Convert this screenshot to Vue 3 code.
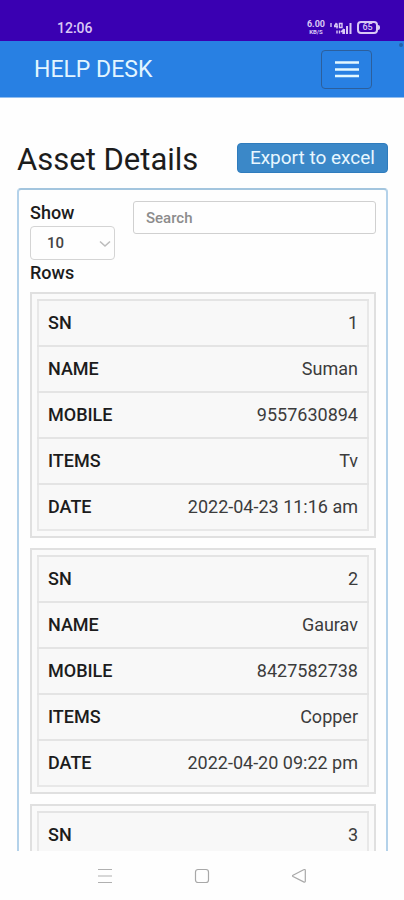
<script setup>
import { ref, computed } from 'vue'

const pageSize = ref('10')
const query = ref('')

const assets = [
  { sn: 1, name: 'Suman', mobile: '9557630894', items: 'Tv', date: '2022-04-23 11:16 am' },
  { sn: 2, name: 'Gaurav', mobile: '8427582738', items: 'Copper', date: '2022-04-20 09:22 pm' },
  { sn: 3 },
]
const fields = ['sn', 'name', 'mobile', 'items', 'date']

const visible = computed(() => {
  const q = query.value.toLowerCase()
  return assets.filter((a) => Object.values(a).join(' ').toLowerCase().includes(q))
})
const fieldsOf = (asset) => fields.filter((f) => f in asset)
</script>

<template>
  <div class="screen">
    <div class="status">
      <span class="clock">12:06</span>
      <div class="indicators">
        <span class="speed"><b>6.00</b><small>KB/S</small></span>
        <svg class="signal" width="22" height="12" viewBox="0 0 22 12" aria-hidden="true">
          <path d="M1 1v4M4 4.500h4M7 1.500v5M4.500 4l2-3M9.500 1.500h2.500v4H9.500zM7 8.500v3M9.500 8.500v3M11 10l2-2v4" fill="none" stroke="#d9c8f5" stroke-width="1.400" />
          <path d="M13 7h2v5h-2zM16 4h2v8h-2zM19.500 1h2v11h-2z" fill="#d9c8f5" />
        </svg>
        <span class="battery">65</span>
      </div>
    </div>

    <header class="navbar">
      <a class="brand" href="#">HELP DESK</a>
      <button class="toggler" type="button" aria-label="Menu">
        <svg width="26" height="18" viewBox="0 0 26 18" aria-hidden="true">
          <path d="M1 2.500h24M1 9.500h24M1 16h24" stroke="#e2f8ff" stroke-width="2.600" />
        </svg>
      </button>
      <span class="dot"></span>
    </header>

    <main class="content">
      <div class="heading">
        <h1>Asset Details</h1>
        <button class="export" type="button">Export to excel</button>
      </div>

      <section class="card">
        <div class="controls">
          <label class="length">
            <span>Show</span>
            <span class="select">
              <select v-model="pageSize">
                <option>10</option>
                <option>25</option>
                <option>50</option>
              </select>
              <svg class="chevron" width="12" height="8" viewBox="0 0 12 8" aria-hidden="true">
                <path d="M1 1.500l5 4.500 5-4.500" fill="none" stroke="#bcbcbc" stroke-width="1.600" />
              </svg>
            </span>
            <span>Rows</span>
          </label>
          <input v-model="query" class="search" type="search" placeholder="Search" aria-label="Search" />
        </div>

        <div class="records">
          <div v-for="asset in visible" :key="asset.sn" class="record">
            <table>
              <tbody>
                <tr v-for="field in fieldsOf(asset)" :key="field">
                  <th scope="row">{{ field.toUpperCase() }}</th>
                  <td>{{ asset[field] }}</td>
                </tr>
              </tbody>
            </table>
          </div>
        </div>
      </section>
    </main>

    <nav class="system">
      <button type="button" aria-label="Recent apps">
        <svg width="16" height="16" viewBox="0 0 16 16" aria-hidden="true">
          <path d="M1 1.500h14M1 8h14M1 14.500h14" stroke="#b0b0b0" stroke-width="1.200" />
        </svg>
      </button>
      <button type="button" aria-label="Home">
        <svg width="16" height="16" viewBox="0 0 16 16" aria-hidden="true">
          <rect x="1.500" y="1.500" width="13" height="13" rx="2.500" fill="none" stroke="#a8a8a8" stroke-width="1.200" />
        </svg>
      </button>
      <button type="button" aria-label="Back">
        <svg width="16" height="16" viewBox="0 0 16 16" aria-hidden="true">
          <path d="M2 7.300 12.600 1.700Q14.300 1 14.300 2.600V13Q14.300 14.600 12.600 13.900L2 8.500Q1 7.900 2 7.300z" fill="none" stroke="#a8a8a8" stroke-width="1.200" />
        </svg>
      </button>
    </nav>
  </div>
</template>

<style>
body {
  margin: 0;
  background: #fefefe;
}
</style>

<style scoped>
.screen {
  display: flex;
  flex-direction: column;
  height: 100vh;
  overflow: hidden;
  font-family: Roboto, sans-serif;
  color: #1c1c1c;
  background: #fefefe;
}
.screen * {
  box-sizing: border-box;
}
button,
input,
select {
  font-family: inherit;
  margin: 0;
}
.status {
  flex: none;
  display: flex;
  justify-content: space-between;
  align-items: center;
  height: 41px;
  padding: 14px 26px 0 57px;
  background: #3a00b2;
  color: #d9c8f5;
}
.clock {
  font-size: 14px;
  font-weight: 500;
  line-height: 16px;
}
.indicators {
  display: flex;
  align-items: center;
  gap: 5px;
}
.speed {
  display: flex;
  flex-direction: column;
  align-items: center;
}
.speed b {
  font-size: 9px;
  line-height: 9px;
}
.speed small {
  font-size: 6px;
  font-weight: 700;
  line-height: 6px;
}
.battery {
  position: relative;
  width: 21px;
  height: 13px;
  border: 2px solid #d9c8f5;
  border-radius: 4px;
  font-size: 9px;
  font-weight: 500;
  line-height: 9px;
  text-align: center;
}
.battery::after {
  content: '';
  position: absolute;
  top: 2px;
  right: -4px;
  width: 2px;
  height: 5px;
  border-radius: 0 2px 2px 0;
  background: #d9c8f5;
}
.navbar {
  position: relative;
  flex: none;
  display: flex;
  justify-content: space-between;
  align-items: center;
  height: 57px;
  padding: 0 32px 0 34px;
  background: #2880e3;
  border-bottom: 1px solid #90bdef;
}
.brand {
  padding-top: 2px;
  color: #e2f5ff;
  font-size: 23px;
  line-height: 32px;
  text-decoration: none;
}
.toggler {
  display: flex;
  align-items: center;
  justify-content: center;
  width: 51px;
  height: 39px;
  padding: 0;
  background: transparent;
  border: 1px solid #2c5f9c;
  border-radius: 4px;
}
.dot {
  position: absolute;
  top: 2px;
  right: 1px;
  width: 4px;
  height: 4px;
  border-radius: 50%;
  background: #2460a8;
}
.content {
  flex: 1;
  min-height: 0;
  overflow: hidden;
  padding: 42px 16px 0 17px;
}
.heading {
  display: flex;
  justify-content: space-between;
  align-items: center;
  height: 40px;
  margin-bottom: 8px;
}
h1 {
  margin: 0;
  font-size: 31px;
  font-weight: 400;
  line-height: 40px;
}
.export {
  height: 30px;
  margin-top: -4px;
  padding: 0 12px;
  border: 1px solid #2f7cbd;
  border-radius: 4px;
  background: #3b88c8;
  color: #e8f7ff;
  font-size: 19px;
  line-height: 28px;
}
.card {
  min-height: 100%;
  padding: 11px 10px 0 11px;
  border: 2px solid #b4d2ea;
  border-top-color: #a3c5de;
  border-radius: 4px;
}
.controls {
  display: flex;
  align-items: flex-start;
  gap: 18px;
}
.length {
  display: flex;
  flex-direction: column;
  gap: 1px;
  width: 85px;
  font-size: 18px;
  font-weight: 500;
  line-height: 24px;
}
.select {
  position: relative;
  display: flex;
}
.select select {
  appearance: none;
  width: 100%;
  height: 34px;
  padding: 0 16px;
  border: 1px solid #d4d4d4;
  border-radius: 4px;
  background: transparent;
  color: #444;
  font-size: 15px;
  font-weight: 500;
}
.chevron {
  position: absolute;
  right: 4px;
  top: 14px;
  pointer-events: none;
}
.search {
  appearance: none;
  flex: 1;
  min-width: 0;
  height: 33px;
  padding: 0 12px;
  border: 1px solid #d0d0d0;
  border-radius: 3px;
  background: transparent;
  color: #444;
  font-size: 15px;
  font-weight: 500;
}
.search::placeholder {
  color: #8c8c8c;
}
.records {
  display: flex;
  flex-direction: column;
  gap: 10px;
  margin-top: 7px;
}
.record {
  padding: 5px;
  border: 2px solid #e0e0e0;
  background: #fafafa;
}
.record:last-child {
  min-height: 245px;
}
table {
  width: 100%;
  border-collapse: collapse;
  border: 2px solid #e8e8e8;
  background: #f8f8f8;
}
tr {
  height: 46px;
  border-top: 2px solid #e4e4e4;
}
.record:last-child tr {
  height: 60px;
}
th,
td {
  padding: 10px 9px;
  line-height: 24px;
  vertical-align: top;
  font-size: 18px;
}
th {
  text-align: left;
  font-weight: 500;
}
td {
  text-align: right;
  color: #3c3c3c;
}
.system {
  flex: none;
  display: flex;
  justify-content: center;
  align-items: center;
  gap: 81px;
  height: 49px;
  background: #fefefe;
}
.system button {
  display: flex;
  padding: 0;
  border: 0;
  background: none;
}
</style>
